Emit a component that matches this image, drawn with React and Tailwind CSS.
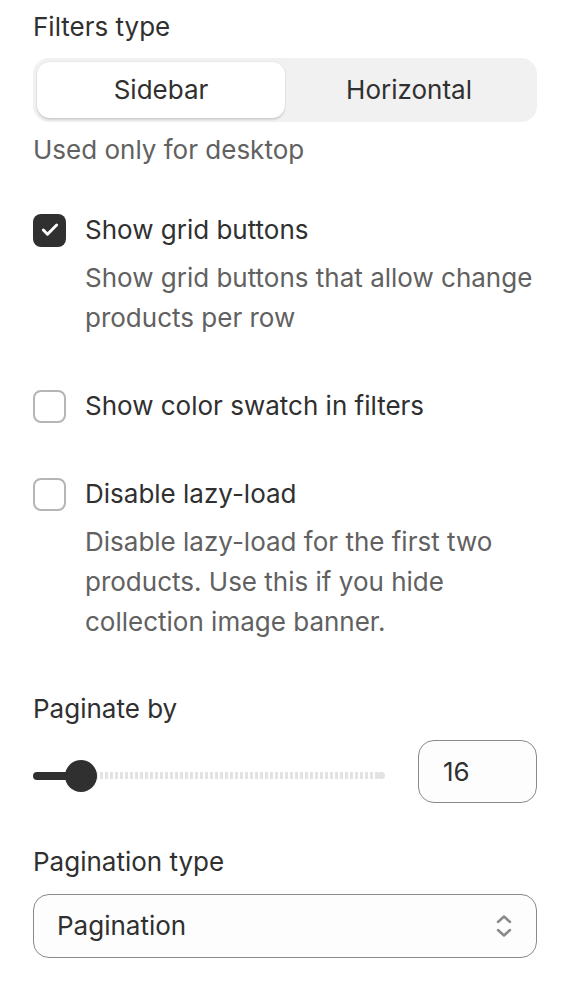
import { Check } from "lucide-react";

function Checkbox({ checked }) {
	return (
		<span
			className={
				checked
					? "flex h-[33px] w-[33px] shrink-0 items-center justify-center rounded-[8px] bg-[#303030]"
					: "h-[33px] w-[33px] shrink-0 rounded-[8px] border-2 border-[#b5b5b5] bg-white"
			}
		>
			{checked && <Check className="h-[20px] w-[20px] text-white" strokeWidth={3.5} />}
		</span>
	);
}

function CheckRow({ checked, label, children, className = "" }) {
	return (
		<div className={className}>
			<div className="flex items-center gap-[19px]">
				<Checkbox checked={checked} />
				<span className="text-[#303030]">{label}</span>
			</div>
			{children && (
				<p className="mt-[8px] pl-[52px] text-[#616161]">{children}</p>
			)}
		</div>
	);
}

export default function App() {
	return (
		<div
			className="min-h-[1002px] w-[578px] bg-white pl-[33px] pr-[41px] pt-[7px] text-[26px] leading-[40px] text-[#303030]"
			style={{ fontFamily: "Inter, 'Noto Sans', sans-serif" }}
		>
			<div>Filters type</div>
			<div className="mt-[11px] flex h-[64px] rounded-[16px] bg-[#f1f1f1] p-[4px]">
				<button
					type="button"
					className="flex-1 rounded-[13px] bg-white text-[#303030] shadow-[0_2px_2px_rgba(0,0,0,0.12),0_0_0_1px_rgba(0,0,0,0.03)]"
				>
					Sidebar
				</button>
				<button type="button" className="flex-1 rounded-[13px] text-[#303030]">
					Horizontal
				</button>
			</div>
			<p className="mt-[8px] text-[#616161]">Used only for desktop</p>

			<CheckRow checked label="Show grid buttons" className="mt-[40px]">
				Show grid buttons that allow change products per row
			</CheckRow>
			<CheckRow label="Show color swatch in filters" className="mt-[48px]" />
			<CheckRow label="Disable lazy-load" className="mt-[48px]">
				Disable lazy-load for the first two products. Use this if you hide
				collection image banner.
			</CheckRow>

			<div className="mt-[47px]">Paginate by</div>
			<div className="mt-[11px] flex items-start">
				<div className="relative mt-[20px] h-[32px] w-[352px]">
					<div className="absolute left-0 top-[12px] h-[8px] w-[52px] rounded-full bg-[#303030]" />
					<div className="absolute left-[62px] right-0 top-[12px] h-[7px] rounded-r-full bg-[repeating-linear-gradient(90deg,#e3e3e3_0px,#e3e3e3_3px,transparent_3px,transparent_5px)]" />
					<div className="absolute right-0 top-[12px] h-[7px] w-[8px] rounded-full bg-[#e3e3e3]" />
					<div className="absolute left-[32px] top-0 h-[32px] w-[32px] rounded-full bg-[#303030]" />
				</div>
				<div className="ml-auto flex h-[63px] w-[119px] items-center rounded-[16px] border border-[#8a8a8a] bg-[#fdfdfd] px-[24px]">
					16
				</div>
			</div>

			<div className="mt-[39px]">Pagination type</div>
			<div className="mt-[12px] flex h-[64px] items-center justify-between rounded-[16px] border border-[#8a8a8a] bg-[#fdfdfd] pl-[23px] pr-[24px]">
				<span>Pagination</span>
				<svg width="16" height="24" viewBox="0 0 16 24" fill="none" stroke="#8a8a8a" strokeWidth="2.5" strokeLinecap="round" strokeLinejoin="round">
					<path d="M2 8 L8 2.5 L14 8" />
					<path d="M2 16 L8 21.5 L14 16" />
				</svg>
			</div>
		</div>
	);
}
